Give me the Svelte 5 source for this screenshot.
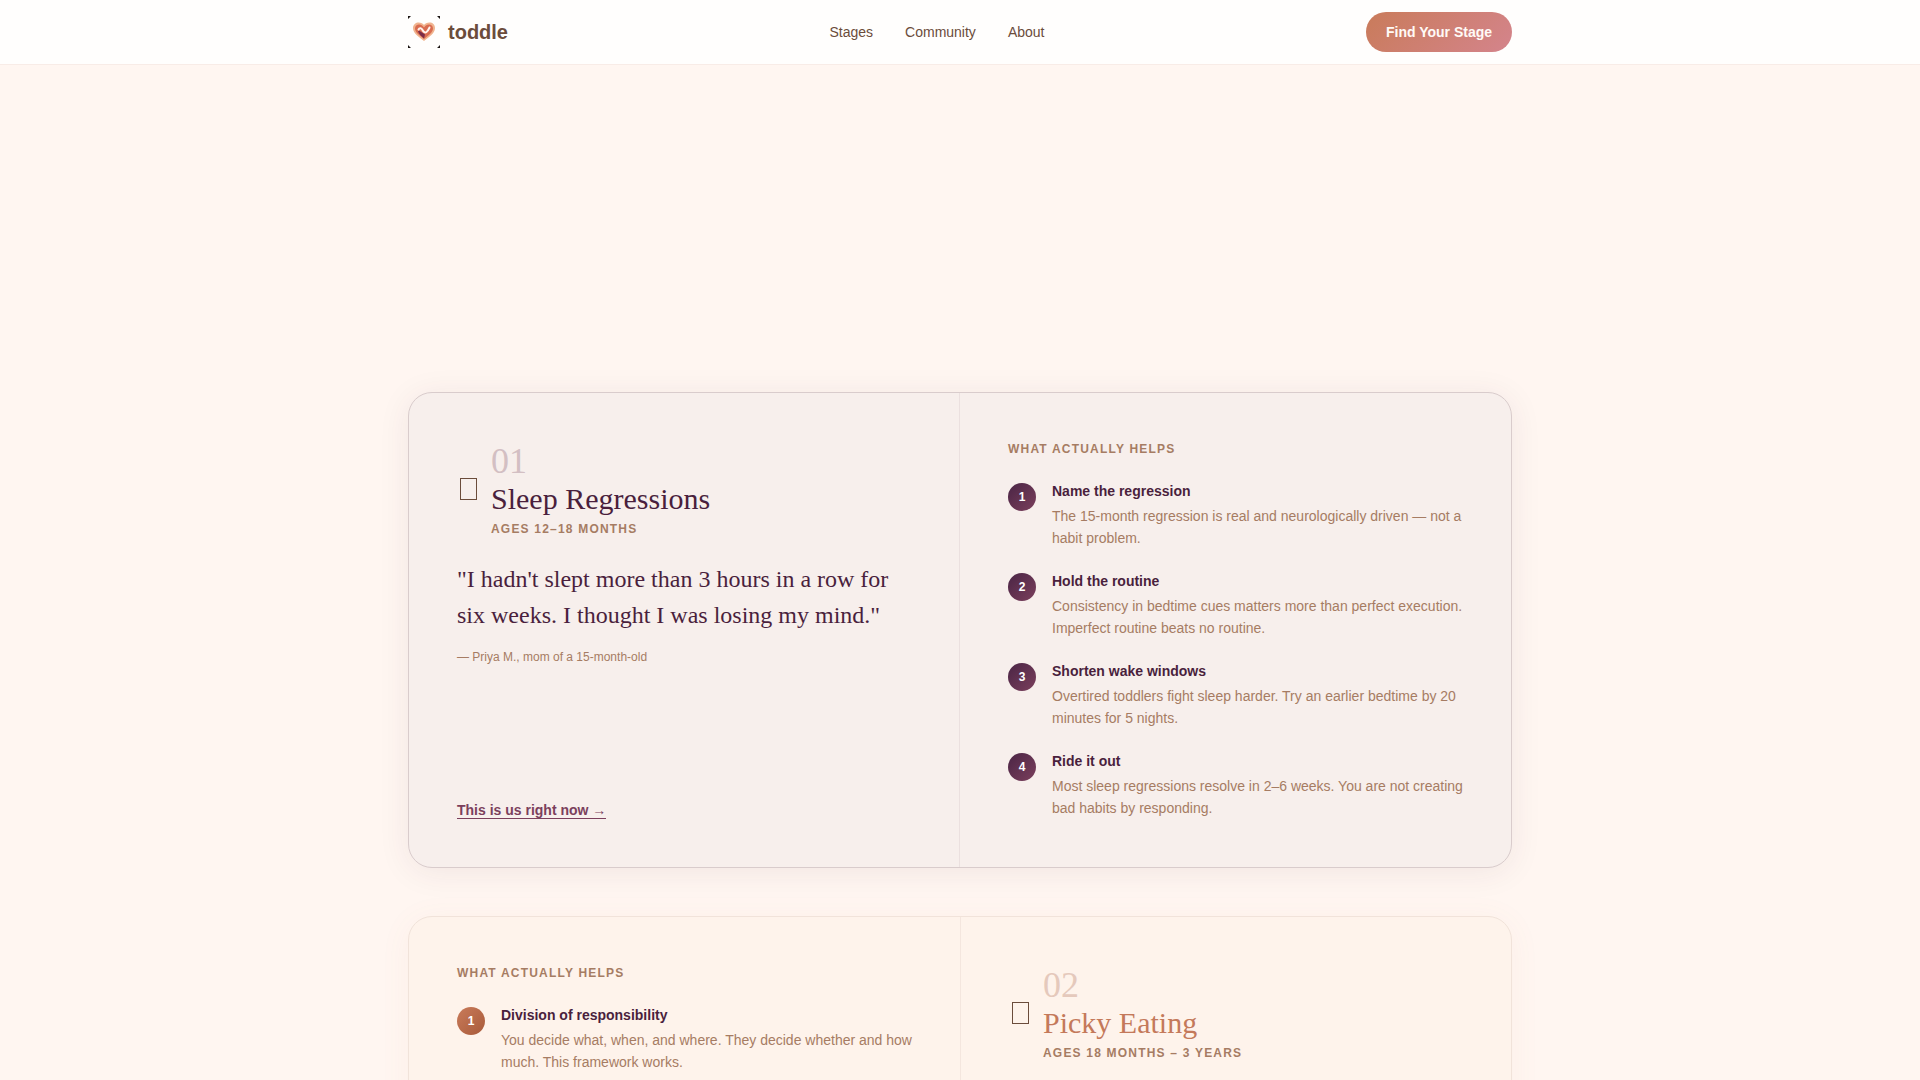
<script lang="ts">
  type Step = { title: string; text: string }

  const links = ['Stages', 'Community', 'About']

  const sleepSteps: Step[] = [
    {
      title: 'Name the regression',
      text: 'The 15-month regression is real and neurologically driven — not a habit problem.'
    },
    {
      title: 'Hold the routine',
      text: 'Consistency in bedtime cues matters more than perfect execution. Imperfect routine beats no routine.'
    },
    {
      title: 'Shorten wake windows',
      text: 'Overtired toddlers fight sleep harder. Try an earlier bedtime by 20 minutes for 5 nights.'
    },
    {
      title: 'Ride it out',
      text: 'Most sleep regressions resolve in 2–6 weeks. You are not creating bad habits by responding.'
    }
  ]

  const eatingSteps: Step[] = [
    {
      title: 'Division of responsibility',
      text: 'You decide what, when, and where. They decide whether and how much. This framework works.'
    }
  ]
</script>

{#snippet stageHeading(number: string, title: string, ages: string)}
  <div class="stage-heading">
    <span class="stage-icon" aria-hidden="true"></span>
    <div>
      <div class="stage-number">{number}</div>
      <h2>{title}</h2>
      <p class="eyebrow stage-ages">{ages}</p>
    </div>
  </div>
{/snippet}

{#snippet helps(steps: Step[])}
  <h3 class="eyebrow helps-title">What actually helps</h3>
  <ol class="steps">
    {#each steps as step, i}
      <li>
        <span class="step-number">{i + 1}</span>
        <div>
          <h4>{step.title}</h4>
          <p>{step.text}</p>
        </div>
      </li>
    {/each}
  </ol>
{/snippet}

<div class="page">
  <header>
    <div class="container bar">
      <a class="brand" href="#top">
        <svg viewBox="0 0 32 32" width="32" height="32" aria-hidden="true">
          <path d="M0 0h3L0 3zM32 0v3l-3-3zM0 32v-3l3 3zM32 32h-3l3-3z" fill="#1a1412" />
          <path
            d="M16 25C11 21 5 17.500 5 12C5 8.500 8 6.500 10.500 6.500C13 6.500 15 7.500 16 9C17 7.500 19 6.500 21.500 6.500C24.500 6.500 27 8.500 27 12C27 17.500 21 21 16 25Z"
            fill="#f0b48f"
          />
          <path
            d="M16 23C12 19.500 7 16.500 7 12.500C7 10 9 8.500 11 8.500C13.500 8.500 15 10 16 11.500C17 10 18.500 8.500 21 8.500C23 8.500 25 10 25 12.500C25 16.500 20 19.500 16 23Z"
            fill="#d96c50"
          />
          <path d="M10 15.500c1-1 2.500 0 4 1l3 2-1 4c-2-2-5-4-6-7z" fill="#7a2c48" />
          <path
            d="M10.500 13.500c1-2 3-1.500 4 .5s2.500 3 4 2 2-2.500 3-4.500"
            fill="none"
            stroke="#fff3ee"
            stroke-width="2"
            stroke-linecap="round"
          />
        </svg>
        <span>toddle</span>
      </a>
      <nav>
        {#each links as link}
          <a href="#{link.toLowerCase()}">{link}</a>
        {/each}
      </nav>
      <button type="button">Find Your Stage</button>
    </div>
  </header>

  <main>
    <div class="container stages">
      <article class="card plum">
        <section class="story">
          {@render stageHeading('01', 'Sleep Regressions', 'Ages 12–18 months')}
          <blockquote>
            "I hadn't slept more than 3 hours in a row for six weeks. I thought I was losing my mind."
          </blockquote>
          <p class="source">— Priya M., mom of a 15-month-old</p>
          <a class="cta" href="#sleep">This is us right now →</a>
        </section>
        <section>
          {@render helps(sleepSteps)}
        </section>
      </article>

      <article class="card clay">
        <section>
          {@render helps(eatingSteps)}
        </section>
        <section class="story">
          {@render stageHeading('02', 'Picky Eating', 'Ages 18 months – 3 years')}
        </section>
      </article>
    </div>
  </main>
</div>

<style>
:global(body) {
  margin: 0;
  background: #fff6f1;
}

.page {
  height: 100vh;
  overflow: hidden;
  color: #6b4c3b;
  font-family: "Liberation Sans", Arial, sans-serif;
  font-size: 14px;
}

h2,
h3,
h4,
p,
blockquote {
  margin: 0;
}

.container {
  box-sizing: border-box;
  max-width: 1152px;
  margin: 0 auto;
  padding: 0 24px;
}

/* Header */
header {
  background: #fffefd;
  border-bottom: 1px solid #f8ece7;
}

.bar {
  display: flex;
  align-items: center;
  justify-content: space-between;
  height: 64px;
}

.brand {
  display: flex;
  align-items: center;
  gap: 8px;
  color: #6b4c3b;
  font-size: 20px;
  font-weight: 700;
  text-decoration: none;
}

nav {
  display: flex;
  gap: 32px;
}

nav a {
  color: #6b4c3b;
  text-decoration: none;
}

button {
  height: 40px;
  padding: 0 20px;
  border: 0;
  border-radius: 20px;
  background: linear-gradient(135deg, #c97b5a, #d4848c);
  color: #fffaf6;
  font: inherit;
  font-weight: 700;
  cursor: pointer;
}

/* Cards */
main {
  padding-top: 327px;
}

.stages {
  display: grid;
  gap: 48px;
}

.card {
  display: grid;
  grid-template-columns: 1fr 1fr;
  min-height: 474px;
  border: 1px solid var(--edge);
  border-radius: 24px;
  background: var(--surface);
  box-shadow: 0 4px 32px var(--shadow);
}

.plum {
  --surface: #f7efec;
  --edge: #d9cccc;
  --divider: #ebe0df;
  --shadow: rgba(74, 32, 64, 0.08);
  --title: #4a1f3d;
  --accent: #7b3f5c;
  --number: #d3bfc3;
  --badge: linear-gradient(135deg, #4a2545, #7b3f5c);
}

.clay {
  --surface: #fef3eb;
  --edge: #f1e3da;
  --divider: #f4e6de;
  --shadow: rgba(201, 123, 90, 0.06);
  --title: #c4795a;
  --accent: #c4795a;
  --number: #e5c9bc;
  --badge: linear-gradient(135deg, #c97b5a, #a85a3a);
}

.card section {
  padding: 48px;
}

.card .story {
  display: flex;
  flex-direction: column;
  align-items: flex-start;
}

.story:first-child {
  border-right: 1px solid var(--divider);
}

.story:last-child {
  border-left: 1px solid var(--divider);
}

.stage-heading {
  display: flex;
  align-items: center;
  gap: 12px;
  margin-bottom: 24px;
}

.stage-icon {
  box-sizing: border-box;
  width: 17px;
  height: 22px;
  margin: 0 2px 0 3px;
  border: 1px solid #6b4c3b;
}

.stage-number,
h2,
blockquote {
  font-family: "Liberation Serif", "Times New Roman", serif;
}

.stage-number {
  color: var(--number);
  font-size: 36px;
  line-height: 40px;
}

h2 {
  color: var(--title);
  font-size: 30px;
  font-weight: 400;
  line-height: 36px;
}

.eyebrow {
  color: #a67c63;
  font-size: 12px;
  font-weight: 700;
  letter-spacing: 0.1em;
  line-height: 16px;
  text-transform: uppercase;
}

.stage-ages {
  margin-top: 4px;
}

blockquote {
  color: #4a1f3d;
  font-size: 24px;
  line-height: 36px;
}

.source {
  margin-top: 16px;
  color: #a67c63;
  font-size: 12px;
  line-height: 16px;
}

.cta {
  margin-top: auto;
  border-bottom: 1px solid var(--accent);
  color: var(--accent);
  font-weight: 700;
  line-height: 16px;
  text-decoration: none;
}

/* Steps */
.helps-title {
  margin-bottom: 22px;
}

.steps {
  display: grid;
  gap: 20px;
  margin: 0;
  padding: 0;
  list-style: none;
}

.steps li {
  display: flex;
  gap: 16px;
}

.step-number {
  display: flex;
  flex-shrink: 0;
  align-items: center;
  justify-content: center;
  width: 28px;
  height: 28px;
  margin-top: 4px;
  border-radius: 50%;
  background: var(--badge);
  color: #fff;
  font-size: 12px;
  font-weight: 700;
}

h4 {
  margin-bottom: 2px;
  color: #4a1f3d;
  font-size: 14px;
  line-height: 24px;
}

.steps p {
  color: #a67c63;
  line-height: 22px;
}
</style>
